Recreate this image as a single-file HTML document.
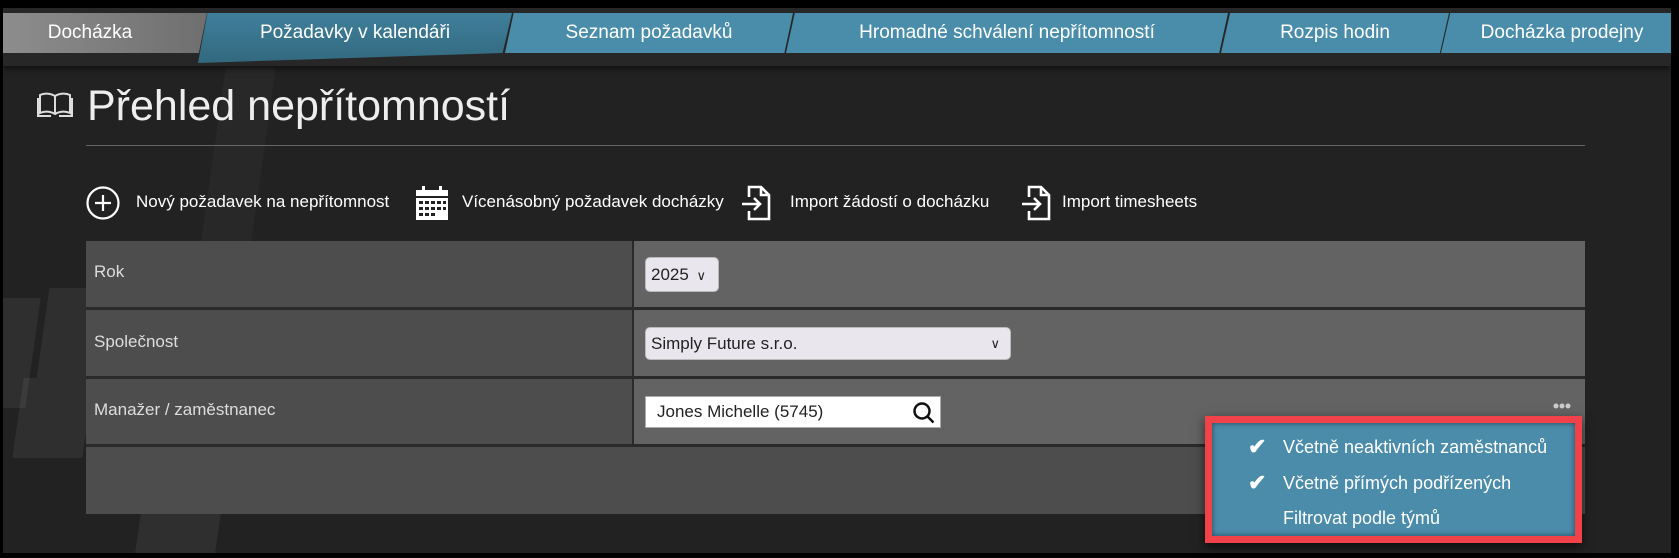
<!DOCTYPE html>
<html><head><meta charset="utf-8"><style>
*{margin:0;padding:0;box-sizing:border-box}
body{width:1679px;height:558px;background:#000;position:relative;overflow:hidden;font-family:"Liberation Sans",sans-serif;color:#fff}
#main{position:absolute;left:3px;top:8px;width:1668px;height:545px;background:#222;overflow:hidden}
.sq{position:absolute;background:rgba(255,255,255,0.06);transform:skewX(-8deg)}
#bar{position:absolute;left:0;top:0;width:1668px;height:58px;background:#272727;box-shadow:0 3px 6px rgba(0,0,0,.5)}
.tab{position:absolute;top:13px;height:40px;font-size:19px;line-height:40px;text-align:center;color:#fff}
.t{position:absolute;color:#fff}
.lab{position:absolute;left:94px;font-size:17px;color:#ddd}
.sel{position:absolute;background:#e9e7ed;border-radius:5px;border:1px solid #bbb;color:#222;font-size:17px;padding-left:5px}
.it{position:absolute;left:1283px;font-size:18px;color:#fff}
.ck{position:absolute;left:1248px;font-size:22px;font-weight:bold;color:#fff}
</style></head><body>
<div id="main">
  <div class="sq" style="left:40px;top:280px;width:50px;height:90px"></div>
  <div class="sq" style="left:15px;top:370px;width:70px;height:80px"></div>
  <div class="sq" style="left:-10px;top:290px;width:40px;height:110px"></div>
  <div class="sq" style="left:135px;top:505px;width:80px;height:40px"></div>
  <div class="sq" style="left:210px;top:60px;width:50px;height:180px;background:rgba(255,255,255,0.03)"></div>
  <div id="bar"></div>
</div>
<!-- tabs -->
<div class="tab" style="left:3px;width:204px;background:linear-gradient(90deg,#8d8d8d,#6f6f6f);clip-path:polygon(0 0,100% 0,96% 100%,0 100%);padding-right:30px">Docházka</div>
<div class="tab" style="left:198px;width:314px;height:50px;background:linear-gradient(180deg,#3f7f9b,#33697f);clip-path:polygon(3% 0,100% 0,97% 80%,0 100%)">Požadavky v kalendáři</div>
<div class="tab" style="left:505px;width:288px;background:#4a8dab;clip-path:polygon(3% 0,100% 0,97% 100%,0 100%)">Seznam požadavků</div>
<div class="tab" style="left:786px;width:442px;background:#4a8dab;clip-path:polygon(2% 0,100% 0,98% 100%,0 100%)">Hromadné schválení nepřítomností</div>
<div class="tab" style="left:1221px;width:228px;background:#4a8dab;clip-path:polygon(4% 0,100% 0,96% 100%,0 100%)">Rozpis hodin</div>
<div class="tab" style="left:1441px;width:230px;background:#4a8dab;clip-path:polygon(4% 0,100% 0,100% 100%,0 100%);padding-left:12px">Docházka prodejny</div>
<!-- title -->
<svg style="position:absolute;left:37px;top:92px" width="36" height="26" viewBox="0 0 36 26" fill="none" stroke="#ddd" stroke-width="2"><path d="M18 4C13 1 7 1 3 3v18c4-2 10-2 15 1 5-3 11-3 15-1V3c-4-2-10-2-15 1z"/><path d="M18 4v18"/><path d="M1 6v18h13M35 6v18H22"/></svg>
<div class="t" style="left:87px;top:82px;font-size:43px;color:#eee">Přehled nepřítomností</div>
<div style="position:absolute;left:86px;top:145px;width:1499px;height:1px;background:#666"></div>
<!-- actions -->
<svg style="position:absolute;left:86px;top:186px" width="34" height="34" viewBox="0 0 34 34" fill="none" stroke="#fff" stroke-width="2.2"><circle cx="17" cy="17" r="15.5"/><path d="M17 9v16M9 17h16"/></svg>
<div class="t" style="left:136px;top:192px;font-size:17px">Nový požadavek na nepřítomnost</div>
<svg style="position:absolute;left:416px;top:186px" width="32" height="34" viewBox="0 0 32 34" fill="#fff"><rect x="0" y="4" width="32" height="6"/><rect x="6" y="0" width="3" height="6"/><rect x="23" y="0" width="3" height="6"/><rect x="0" y="12" width="32" height="22"/><g fill="#222"><rect x="3" y="15" width="4" height="3"/><rect x="9" y="15" width="4" height="3"/><rect x="15" y="15" width="4" height="3"/><rect x="21" y="15" width="4" height="3"/><rect x="27" y="15" width="3" height="3"/><rect x="3" y="21" width="4" height="3"/><rect x="9" y="21" width="4" height="3"/><rect x="15" y="21" width="4" height="3"/><rect x="21" y="21" width="4" height="3"/><rect x="27" y="21" width="3" height="3"/><rect x="3" y="27" width="4" height="3"/><rect x="9" y="27" width="4" height="3"/><rect x="15" y="27" width="4" height="3"/></g></svg>
<div class="t" style="left:462px;top:192px;font-size:17px">Vícenásobný požadavek docházky</div>
<svg style="position:absolute;left:741px;top:185px" width="30" height="36" viewBox="0 0 30 36" fill="none" stroke="#fff" stroke-width="2.6"><path d="M8 12V2h12l8 8v24H8v-8"/><path d="M20 2v8h8"/><path d="M1 19h18M13 13l6 6-6 6"/></svg>
<div class="t" style="left:790px;top:192px;font-size:17px">Import žádostí o docházku</div>
<svg style="position:absolute;left:1021px;top:185px" width="30" height="36" viewBox="0 0 30 36" fill="none" stroke="#fff" stroke-width="2.6"><path d="M8 12V2h12l8 8v24H8v-8"/><path d="M20 2v8h8"/><path d="M1 19h18M13 13l6 6-6 6"/></svg>
<div class="t" style="left:1062px;top:192px;font-size:17px">Import timesheets</div>
<!-- table -->
<div style="position:absolute;left:86px;top:241px;width:1499px;height:273px;background:#4d4d4d"></div>
<div style="position:absolute;left:634px;top:241px;width:951px;height:204px;background:#636363"></div>
<div style="position:absolute;left:632px;top:241px;width:2px;height:204px;background:#2a2a2a"></div>
<div style="position:absolute;left:86px;top:307px;width:1499px;height:3px;background:#2a2a2a"></div>
<div style="position:absolute;left:86px;top:376px;width:1499px;height:3px;background:#2a2a2a"></div>
<div style="position:absolute;left:86px;top:444px;width:1499px;height:3px;background:#2a2a2a"></div>
<div class="lab" style="top:262px">Rok</div>
<div class="lab" style="top:332px">Společnost</div>
<div class="lab" style="top:400px">Manažer / zaměstnanec</div>
<div class="sel" style="left:645px;top:257px;width:74px;height:35px;line-height:33px">2025 <span style="font-size:13px;margin-left:3px">&#8744;</span></div>
<div class="sel" style="left:645px;top:327px;width:366px;height:33px;line-height:31px">Simply Future s.r.o.<span style="position:absolute;right:10px;font-size:13px">&#8744;</span></div>
<div style="position:absolute;left:645px;top:396px;width:296px;height:32px;background:#fff;border:1px solid #aaa;color:#222;font-size:17px;line-height:30px;padding-left:11px">Jones Michelle (5745)
<svg style="position:absolute;right:4px;top:4px" width="24" height="24" viewBox="0 0 24 24" fill="none" stroke="#111" stroke-width="2.5"><circle cx="10" cy="10" r="7.5"/><path d="M15.5 15.5l6 6"/></svg></div>
<svg style="position:absolute;left:1553px;top:403px" width="18" height="6" viewBox="0 0 18 6" fill="#ccc"><circle cx="3" cy="3" r="2.5"/><circle cx="9" cy="3" r="2.5"/><circle cx="15" cy="3" r="2.5"/></svg>
<!-- dropdown -->
<div style="position:absolute;left:1205px;top:416px;width:377px;height:127px;border:7px solid #f04248;background:#4a8caa;box-shadow:0 4px 10px rgba(0,0,0,.6)"></div>
<div style="position:absolute;left:1212px;top:423px;width:363px;height:113px;box-shadow:inset 0 0 6px rgba(0,0,0,.5)"></div>
<div class="ck" style="top:434px">&#10004;</div>
<div class="it" style="top:437px">Včetně neaktivních zaměstnanců</div>
<div class="ck" style="top:470px">&#10004;</div>
<div class="it" style="top:473px">Včetně přímých podřízených</div>
<div class="it" style="top:508px">Filtrovat podle týmů</div>
</body></html>
